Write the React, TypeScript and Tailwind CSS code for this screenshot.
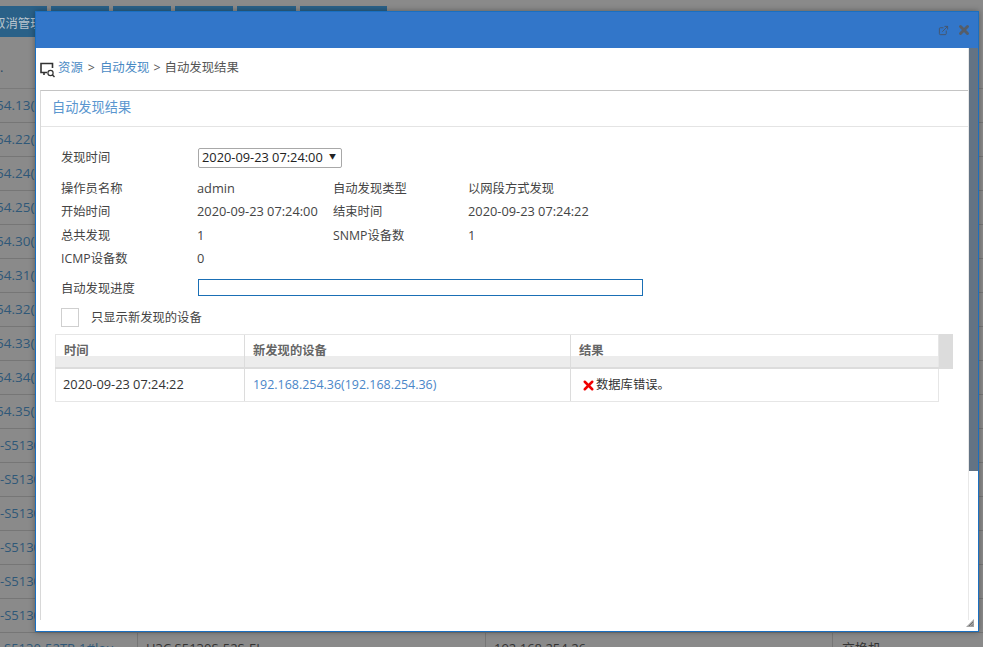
import React from "react";
import { ExternalLink, X } from "lucide-react";

const font = "font-['Open_Sans','Noto_Sans_CJK_SC',sans-serif]";

const bgRows = [
  "54.13(192.168.254.13)",
  "54.22(192.168.254.22)",
  "54.24(192.168.254.24)",
  "54.25(192.168.254.25)",
  "54.30(192.168.254.30)",
  "54.31(192.168.254.31)",
  "54.32(192.168.254.32)",
  "54.33(192.168.254.33)",
  "54.34(192.168.254.34)",
  "54.35(192.168.254.35)",
  "-S5130-52TP",
  "-S5130-52TP",
  "-S5130-52TP",
  "-S5130-52TP",
  "-S5130-52TP",
  "-S5130-52TP",
];

const info = [
  ["操作员名称", "admin", "自动发现类型", "以网段方式发现"],
  ["开始时间", "2020-09-23 07:24:00", "结束时间", "2020-09-23 07:24:22"],
  ["总共发现", "1", "SNMP设备数", "1"],
  ["ICMP设备数", "0", "", ""],
];

const headCell = "pl-[8px] pt-[7px] bg-[linear-gradient(#fff_0,#fff_21px,#ececec_21px,#ececec_100%)]";

const BreadcrumbIcon = () => (
  <svg width="18" height="18" viewBox="0 0 18 18" fill="none" className="shrink-0 mt-[3px]">
    <path d="M8 11.5H2V2.5H13.5V7" stroke="#333" strokeWidth="1.6" />
    <path d="M5 11.5V14" stroke="#333" strokeWidth="1.6" />
    <circle cx="11.5" cy="12" r="2.6" stroke="#333" strokeWidth="1.2" />
    <path d="M13.5 14L15.5 16" stroke="#333" strokeWidth="1.4" />
  </svg>
);

const App: React.FC = () => {
  return (
    <div className={`relative w-[983px] h-[647px] overflow-hidden bg-[#8a8a8a] ${font}`}>
      {/* page behind the dialog */}
      <div className="flex gap-[4px] pt-[6px] h-[37px] bg-[#8a8a8a]">
        <div className="w-[47px] h-[31px] bg-[#2a6188] text-[#b9c5ce] text-[12.4px] leading-[35px] overflow-hidden whitespace-nowrap">
          <span className="-ml-[7px] block">取消管理</span>
        </div>
        <div className="w-[58px] h-[31px] bg-[#2a6188]" />
        <div className="w-[58px] h-[31px] bg-[#2a6188]" />
        <div className="w-[58px] h-[31px] bg-[#2a6188]" />
        <div className="w-[59px] h-[31px] bg-[#2a6188]" />
        <div className="w-[87px] h-[31px] bg-[#2a6188]" />
      </div>
      <div className="h-[52px] border-b border-[#7a7a7a] text-[#2a4a66] text-[13px] pt-[24px] leading-none">.</div>
      {bgRows.map((t, i) => (
        <div
          key={i}
          className={
            i < 10
              ? "h-[34px] border-b border-[#767676] overflow-hidden whitespace-nowrap text-[13.5px] leading-[33px] text-[#2f5878] -ml-[4px]"
              : "h-[34px] border-b border-[#767676] overflow-hidden whitespace-nowrap text-[13px] leading-[33px] text-[#2f5878]"
          }
        >
          {t}
        </div>
      ))}
      <div className="flex h-[34px] text-[13px] leading-[30px] whitespace-nowrap text-[#333]">
        <div className="w-[138px] pl-[4px] text-[#2f5878] border-r border-[#767676]">S5130-52TP-1#lou</div>
        <div className="w-[348px] pl-[8px] border-r border-[#767676]">H3C S5130S-52S-EI</div>
        <div className="w-[347px] pl-[8px] border-r border-[#767676]">192.168.254.26</div>
        <div className="pl-[9px]">交换机</div>
      </div>

      {/* dialog */}
      <div className="absolute left-[35px] top-[11px] w-[944px] h-[621px] border border-[#1a6fc0] bg-white flex flex-col shadow-[0_0_6px_rgba(0,0,0,0.35)]">
        <div className="h-[36px] shrink-0 bg-[#3276c9] flex items-center justify-end gap-[8px] pr-[7px]">
          <ExternalLink size={11} strokeWidth={2} className="text-[#465468]" />
          <X size={14} strokeWidth={5} className="text-[#555d68]" />
        </div>

        <div className="flex-1 flex min-h-0">
          <div className="flex-1 min-w-0 flex flex-col">
            <div className="h-[42px] shrink-0 flex items-center pl-[3px] pb-[2px] text-[12.4px] text-[#555]">
              <BreadcrumbIcon />
              <span className="ml-[1px] text-[#4a8ac4]">资源</span>
              <span className="mx-[5px]">&gt;</span>
              <span className="text-[#4a8ac4]">自动发现</span>
              <span className="mx-[4px]">&gt;</span>
              <span>自动发现结果</span>
            </div>

            <div className="flex-1 ml-[4px] border-l border-[#d8d8d8] border-t border-t-[#c4c4c4] mb-[11px]">
              <div className="h-[36px] flex items-center pl-[11px] pb-[1px] text-[13.2px] text-[#5a96cf] border-b border-[#e4e4e4]">
                自动发现结果
              </div>

              <div className="pl-[20px] pt-[20px] text-[12.3px] text-[#444]">
                <div className="flex items-center h-[21px]">
                  <div className="w-[137px] pt-[2px]">发现时间</div>
                  <div className="w-[144px] h-[20px] border border-[#a8a8a8] rounded-[2px] flex items-center justify-between pl-[3px] pr-[5px] text-[12.8px] text-[#222]">
                    <span>2020-09-23 07:24:00</span>
                    <span className="text-[7px]">▼</span>
                  </div>
                </div>

                <div className="mt-[9px]">
                  {info.map((r, i) => (
                    <div key={i} className="grid grid-cols-[136px_136px_135px_1fr] items-center h-[23.4px]">
                      <div className="pt-[1px]">{r[0]}</div>
                      <div className="text-[12.8px]">{r[1]}</div>
                      <div className="pt-[1px]">{r[2]}</div>
                      <div className="text-[12.8px]">{i === 0 ? <span className="text-[12.3px]">{r[3]}</span> : r[3]}</div>
                    </div>
                  ))}
                </div>

                <div className="flex items-center mt-[8px] h-[17px]">
                  <div className="w-[137px] pt-[4px]">自动发现进度</div>
                  <div className="w-[445px] h-[17px] border border-[#1a6fb5]" />
                </div>

                <div className="flex items-center mt-[12px] h-[19px]">
                  <div className="w-[18px] h-[19px] border border-[#cfcfcf] mr-[12px]" />
                  <span className="pt-[3px]">只显示新发现的设备</span>
                </div>
              </div>

              <div className="ml-[14px] mt-[7px] w-[898px]">
                <div className="flex h-[35px] bg-[#dcdcdc]">
                  <div className="w-[884px] h-[33px] flex border border-[#e6e6e6] border-b-0 text-[12.3px] font-semibold text-[#666]">
                    <div className={`w-[189px] border-r border-[#dcdcdc] ${headCell}`}>时间</div>
                    <div className={`w-[326px] border-r border-[#dcdcdc] ${headCell}`}>新发现的设备</div>
                    <div className={`flex-1 ${headCell}`}>结果</div>
                  </div>
                </div>
                <div className="w-[884px] h-[33px] flex items-center border border-[#e6e6e6] border-t-0 text-[12.8px] text-[#333]">
                  <div className="w-[189px] h-full flex items-center pl-[7px] pt-[1px] border-r border-[#dcdcdc]">2020-09-23 07:24:22</div>
                  <div className="w-[326px] h-full flex items-center pl-[8px] pt-[1px] border-r border-[#dcdcdc] text-[12.45px] text-[#4a86c8]">192.168.254.36(192.168.254.36)</div>
                  <div className="flex-1 h-full flex items-center pl-[10px] pt-[1px] text-[12.3px]">
                    <X size={15} strokeWidth={4} className="text-[#f00000]" />
                    <span>数据库错误。</span>
                  </div>
                </div>
              </div>
            </div>
          </div>

          <div className="w-[10px] shrink-0 border-l border-[#e8e8e8] mb-[11px]">
            <div className="h-[423px] bg-[#637384]" />
          </div>
        </div>

        {/* resize grip */}
        <svg width="8" height="8" viewBox="0 0 8 8" className="absolute right-[4px] bottom-[4px]">
          <path d="M8 0V8H0Z" fill="#a4a4a4" />
          <path d="M7 3L3 7M7 5.5L5.5 7" stroke="#6e6e6e" strokeWidth="1" />
        </svg>
      </div>
    </div>
  );
};

export default App;
